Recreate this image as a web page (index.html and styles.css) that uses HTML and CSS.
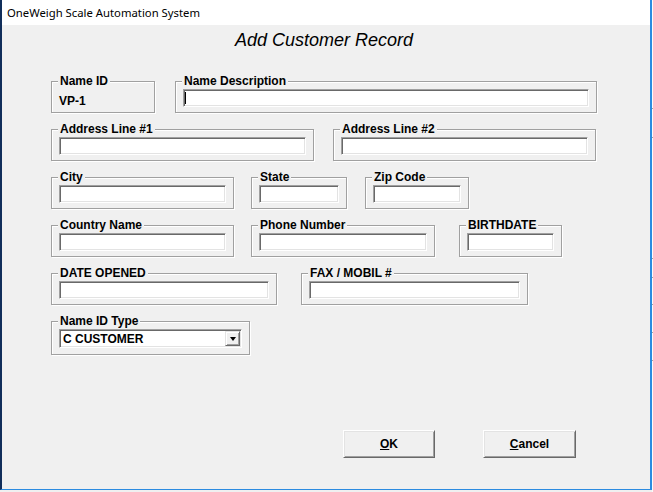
FILE: index.html
```html
<!DOCTYPE html>
<html>
<head>
<meta charset="utf-8">
<title>OneWeigh Scale Automation System</title>
<link rel="stylesheet" href="styles.css">
</head>
<body>
<div class="screen">
  <div class="window">
    <div class="titlebar">OneWeigh Scale Automation System</div>
    <div class="client">
      <h1 class="heading">Add Customer Record</h1>
      <div class="form">
        <div class="row">
          <div class="group f-nameid">
            <div class="legend">Name ID</div>
            <div class="value">VP-1</div>
          </div>
          <div class="group f-namedesc">
            <div class="legend">Name Description</div>
            <div class="textbox"><span class="caret"></span></div>
          </div>
        </div>
        <div class="row">
          <div class="group f-addr1">
            <div class="legend">Address Line #1</div>
            <div class="textbox"></div>
          </div>
          <div class="group f-addr2">
            <div class="legend">Address Line #2</div>
            <div class="textbox"></div>
          </div>
        </div>
        <div class="row">
          <div class="group f-city">
            <div class="legend">City</div>
            <div class="textbox"></div>
          </div>
          <div class="group f-state">
            <div class="legend">State</div>
            <div class="textbox"></div>
          </div>
          <div class="group f-zip">
            <div class="legend">Zip Code</div>
            <div class="textbox"></div>
          </div>
        </div>
        <div class="row">
          <div class="group f-country">
            <div class="legend">Country Name</div>
            <div class="textbox"></div>
          </div>
          <div class="group f-phone">
            <div class="legend">Phone Number</div>
            <div class="textbox"></div>
          </div>
          <div class="group f-birth">
            <div class="legend">BIRTHDATE</div>
            <div class="textbox"></div>
          </div>
        </div>
        <div class="row">
          <div class="group f-opened">
            <div class="legend">DATE OPENED</div>
            <div class="textbox"></div>
          </div>
          <div class="group f-fax">
            <div class="legend">FAX / MOBIL #</div>
            <div class="textbox"></div>
          </div>
        </div>
        <div class="row">
          <div class="group group-tall f-type">
            <div class="legend">Name ID Type</div>
            <div class="select">
              <span class="select-text">C CUSTOMER</span>
              <span class="drop-btn"><span class="arrow"></span></span>
            </div>
          </div>
        </div>
        <div class="buttons">
          <div class="button"><span><u>O</u>K</span></div>
          <div class="button button-cancel"><span><u>C</u>ancel</span></div>
        </div>
      </div>
    </div>
  </div>
  <div class="edge"></div>
</div>
</body>
</html>
```
FILE: styles.css
```css
* { box-sizing: border-box; }

html, body {
  margin: 0;
  padding: 0;
}

body {
  background: #f0f0f0;
  width: 653px;
  height: 492px;
  overflow: hidden;
  font-family: "Liberation Sans", Arial, sans-serif;
  color: #000;
}

.screen {
  display: flex;
  width: 653px;
  height: 490px;
}

.window {
  width: 652px;
  height: 490px;
  display: flex;
  flex-direction: column;
  border-left: 2px solid #112e5a;
  border-right: 2px solid #2b8be0;
  border-bottom: 1px solid #2b8be0;
}

.titlebar {
  height: 25px;
  flex: none;
  background: #fff;
  padding-left: 5px;
  font-family: "Noto Sans", "Open Sans", sans-serif;
  font-size: 11.3px;
  line-height: 25px;
  color: #000;
}

.client {
  flex: 1;
  background: #f0f0f0;
}

.heading {
  margin: 0;
  padding: 5px 4px 0 0;
  height: 26px;
  text-align: center;
  font-family: "Liberation Sans", Arial, sans-serif;
  font-style: italic;
  font-weight: normal;
  font-size: 18px;
  line-height: 21px;
}

.form {
  margin-top: 30px;
  padding-left: 49px;
  display: flex;
  flex-direction: column;
  gap: 16px;
}

.row {
  display: flex;
}

.group {
  height: 32px;
  border: 1px solid #a0a0a0;
  box-shadow: 1px 1px 0 #fff, inset 1px 1px 0 #fff;
  padding: 0 7px;
  font-size: 12px;
  font-weight: bold;
}

.group-tall {
  height: 34px;
}

.legend {
  width: fit-content;
  margin: -8px 0 1px -1px;
  padding: 0 2px;
  line-height: 14px;
  height: 14px;
  background: #f0f0f0;
  white-space: nowrap;
}

.value {
  margin-top: 6px;
  line-height: 14px;
}

.textbox {
  height: 18px;
  background: #fff;
  border: 1px solid;
  border-color: #a0a0a0 #fff #fff #a0a0a0;
  box-shadow: inset 1px 1px 0 #696969, inset -1px -1px 0 #e3e3e3;
  display: flex;
  align-items: flex-start;
}

.caret {
  display: block;
  width: 1px;
  height: 12px;
  margin: 2px 0 0 1px;
  background: #000;
}

.select {
  height: 19px;
  background: #fff;
  border: 1px solid;
  border-color: #a0a0a0 #fff #fff #a0a0a0;
  box-shadow: inset 1px 1px 0 #696969, inset -1px -1px 0 #e3e3e3;
  display: flex;
  align-items: center;
  justify-content: space-between;
  padding: 1px 1px 1px 3px;
}

.select-text {
  line-height: 14px;
}

.drop-btn {
  width: 15px;
  height: 15px;
  background: #f0f0f0;
  border: 1px solid;
  border-color: #e3e3e3 #696969 #696969 #e3e3e3;
  box-shadow: inset 1px 1px 0 #fff, inset -1px -1px 0 #a0a0a0;
  display: flex;
  align-items: center;
  justify-content: center;
}

.arrow {
  width: 1px;
  height: 0;
  border-left: 3px solid transparent;
  border-right: 3px solid transparent;
  border-top: 4px solid #000;
  margin-top: 1px;
}

.f-nameid { width: 104px; }
.f-namedesc { width: 422px; margin-left: 20px; }
.f-addr1 { width: 263px; }
.f-addr2 { width: 263px; margin-left: 19px; }
.f-city { width: 183px; }
.f-state { width: 96px; margin-left: 17px; }
.f-zip { width: 104px; margin-left: 18px; }
.f-country { width: 183px; }
.f-phone { width: 184px; margin-left: 17px; }
.f-birth { width: 103px; margin-left: 24px; }
.f-opened { width: 226px; }
.f-fax { width: 227px; margin-left: 24px; }
.f-type { width: 199px; }

.buttons {
  display: flex;
  gap: 48px;
  margin-top: 59px;
  margin-left: 292px;
}

.button {
  width: 92px;
  height: 28px;
  background: #f0f0f0;
  border: 1px solid;
  border-color: #fff #696969 #696969 #fff;
  box-shadow: inset 1px 1px 0 #e3e3e3, inset -1px -1px 0 #a0a0a0;
  display: flex;
  align-items: center;
  justify-content: center;
  font-size: 12px;
  font-weight: bold;
  line-height: 14px;
}

.button-cancel {
  width: 93px;
}

.edge {
  width: 1px;
  height: 492px;
  background:
    linear-gradient(#a0a0a0, #a0a0a0) 0 108px / 1px 1px no-repeat,
    linear-gradient(#a0a0a0, #a0a0a0) 0 137px / 1px 1px no-repeat,
    linear-gradient(#a0a0a0, #a0a0a0) 0 258px / 1px 1px no-repeat,
    linear-gradient(#a0a0a0, #a0a0a0) 0 277px / 1px 1px no-repeat,
    linear-gradient(#a0a0a0, #a0a0a0) 0 304px / 1px 1px no-repeat,
    linear-gradient(#a0a0a0, #a0a0a0) 0 332px / 1px 1px no-repeat,
    linear-gradient(#a0a0a0, #a0a0a0) 0 360px / 1px 1px no-repeat,
    #fafafa;
}
```
